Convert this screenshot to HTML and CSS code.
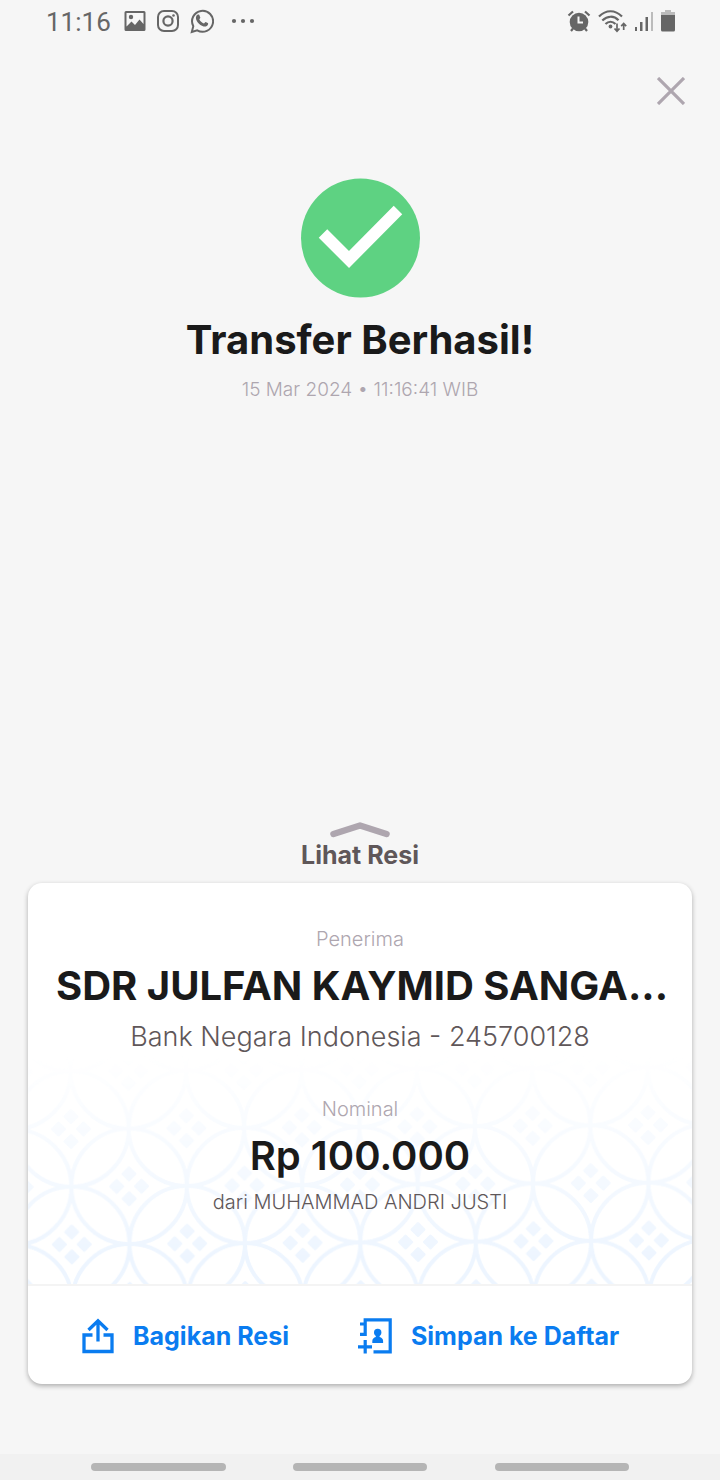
FILE: index.html
```
<!DOCTYPE html>
<html lang="id">
<head>
<meta charset="utf-8">
<meta name="viewport" content="width=device-width, initial-scale=1">
<title>Transfer Berhasil</title>
<link rel="stylesheet" href="styles.css">
</head>
<body>
<div class="screen">
  <div class="status">
    <div class="status-left">
      <span class="clock">11:16</span>
      <svg class="icon" width="22" height="24" viewBox="0 0 22 24" aria-hidden="true"><path fill-rule="evenodd" d="M2 2h18a1.500 1.500 0 0 1 1.500 1.500v17A1.500 1.500 0 0 1 20 22H2a1.500 1.500 0 0 1-1.500-1.500v-17A1.500 1.500 0 0 1 2 2zM2.500 4v13.500l5-5 3.500 3.500 4.500-5.500 4 4.500V4z"/><circle cx="7" cy="8" r="2.200"/></svg>
      <svg class="icon line" width="22" height="24" viewBox="0 0 22 24" aria-hidden="true"><rect x="1" y="2" width="20" height="20" rx="6" stroke-width="2"/><circle cx="11" cy="12" r="4.600" stroke-width="2.200"/><circle class="solid" cx="16.500" cy="6.500" r="1.300"/></svg>
      <svg class="icon" width="24" height="26" viewBox="0 0 24 26" aria-hidden="true"><path fill="none" stroke="currentColor" stroke-width="2" d="M1.800 24l1.500-5.800A10.500 10.500 0 1 1 7.200 22.300z"/><path d="M8.300 6.500c.6 0 .8.100 1 .6l1 2.300c.2.500-.9 1.500-1 1.900.9 2 2.500 3.400 4.600 4.200.5 0 1.200-1.500 1.600-1.500.3 0 2.400 1.100 2.600 1.300.3 1.400-.8 2.900-2.300 3.200-4.300.5-9.800-4.500-9.900-8.600 0-1.600 1-3.400 2.400-3.400z"/></svg>
      <svg class="icon dots" width="24" height="24" viewBox="0 0 24 24" aria-hidden="true"><circle cx="3" cy="12" r="2.100"/><circle cx="12" cy="12" r="2.100"/><circle cx="21" cy="12" r="2.100"/></svg>
    </div>
    <div class="status-right">
      <svg class="icon" width="24" height="24" viewBox="0 0 24 24" aria-hidden="true"><circle cx="12" cy="13" r="9.300"/><path fill="none" stroke="currentColor" stroke-width="2.200" d="M1.500 6.500l4.500-4M22.500 6.500l-4.500-4M6 19.500L4 22M18 19.500l2 2.500"/><path class="cut" d="M11.500 7.500v6H16"/></svg>
      <svg class="icon" width="29" height="24" viewBox="0 0 29 24" aria-hidden="true"><path fill="none" stroke="currentColor" stroke-width="2.200" d="M1 7.500C8 .5 17 .5 24 7.500M4.300 11.500C9.500 6.500 16 6.500 20.500 11.300M7.500 15c3-3 7-3 10 0"/><circle cx="12.500" cy="17.500" r="1.900"/><path fill="none" stroke="currentColor" stroke-width="1.700" d="M19 14.500V22M16.500 19.500L19 22.200l2.500-2.700M25.700 21v-6.500M23.200 17.200l2.500-2.700 2.500 2.700"/></svg>
      <svg class="icon" width="20" height="24" viewBox="0 0 20 24" aria-hidden="true"><path d="M1 18h2v4H1zM6 13h2.500v9H6zM11.500 8H14v14h-2.500z"/><path class="faint" d="M17 3h2v19h-2z"/></svg>
      <svg class="icon" width="14" height="24" viewBox="0 0 14 24" aria-hidden="true"><path class="faint" d="M4 1h6v2h4v4H0V3h4z"/><path d="M0 6h14V21a1.500 1.500 0 0 1-1.500 1.500h-11A1.500 1.500 0 0 1 0 21z"/></svg>
    </div>
  </div>

  <header class="topbar">
    <button class="close" type="button" aria-label="Tutup">
      <svg width="28" height="28" viewBox="0 0 28 28"><path d="M1 1l26 26M27 1L1 27" fill="none" stroke="currentColor" stroke-width="3.200"/></svg>
    </button>
  </header>

  <main class="main">
    <section class="result">
      <svg width="120" height="120" viewBox="0 0 120 120" aria-hidden="true"><circle cx="60.500" cy="60" r="59.500" fill="#5ed282"/><path d="M23 55.500L49 81.500l49-49.500" fill="none" stroke="#fff" stroke-width="12"/></svg>
      <h1 class="headline">Transfer Berhasil!</h1>
      <p class="date">15 Mar 2024 • 11:16:41 WIB</p>
    </section>

    <section class="receipt">
      <button class="expand" type="button">
        <svg width="60" height="18" viewBox="0 0 60 18" aria-hidden="true"><path d="M3.500 13L30 4.500 56.500 13" fill="none" stroke="#aea6af" stroke-width="6.500" stroke-linecap="round" stroke-linejoin="round"/></svg>
        <span>Lihat Resi</span>
      </button>
      <div class="card">
        <div class="recipient">
          <p class="label">Penerima</p>
          <h2 class="value">SDR JULFAN KAYMID SANGA...</h2>
          <p class="bank">Bank Negara Indonesia - 245700128</p>
        </div>
        <div class="amount">
          <svg class="batik" width="100%" height="100%" aria-hidden="true">
            <defs>
              <pattern id="kawung" width="116" height="116" patternUnits="userSpaceOnUse" patternTransform="translate(43 74) rotate(-0.400) scale(0.995)">
                <g fill="none" stroke="#edf5ff" stroke-width="4">
                  <circle cx="0" cy="0" r="58"/><circle cx="116" cy="0" r="58"/><circle cx="0" cy="116" r="58"/><circle cx="116" cy="116" r="58"/><circle cx="58" cy="58" r="58"/>
                </g>
                <g fill="#edf5ff" stroke="#edf5ff" stroke-width="3" stroke-linejoin="round">
                  <path id="gem" d="M0-18.500l6 6L0-6.500-6-12.500zM0 6.500l6 6L0 18.500-6 12.500zM-12.500-6L-6.500 0-12.500 6-18.500 0zM12.500-6L18.500 0 12.500 6 6.500 0z"/>
                  <use href="#gem" x="116"/><use href="#gem" y="116"/><use href="#gem" x="116" y="116"/><use href="#gem" x="58" y="58"/>
                </g>
              </pattern>
              <linearGradient id="fade" x1="0" y1="0" x2="0" y2="1"><stop offset="0" stop-color="#fff" stop-opacity="0"/><stop offset="0.900" stop-color="#fff"/></linearGradient>
              <mask id="rise"><rect width="100%" height="100%" fill="url(#fade)"/></mask>
            </defs>
            <rect width="100%" height="100%" fill="url(#kawung)" mask="url(#rise)"/>
          </svg>
          <p class="label">Nominal</p>
          <p class="value total">Rp 100.000</p>
          <p class="sender">dari MUHAMMAD ANDRI JUSTI</p>
        </div>
        <div class="actions">
          <button class="action" type="button">
            <svg width="32" height="36" viewBox="0 0 32 36" aria-hidden="true"><path d="M10.500 17H2v16.500h28V17h-8.500M16 3v20.500M6.500 12L16 2.700 25.500 12" fill="none" stroke="currentColor" stroke-width="3.300"/></svg>
            <span>Bagikan Resi</span>
          </button>
          <button class="action" type="button">
            <svg width="34" height="36" viewBox="0 0 34 36" aria-hidden="true"><path d="M7.200 18V1.800h25v32H15.500M2 6h6M2 16.300h6M7.200 22v13.500M0 28.800h14" fill="none" stroke="currentColor" stroke-width="3.200"/><circle cx="19.700" cy="14.500" r="3.700"/><path d="M14.300 25v-2c0-2 1.500-3.400 3.500-4v-2h3.800v2c2 .6 3.500 2 3.500 4v2z"/></svg>
            <span>Simpan ke Daftar</span>
          </button>
        </div>
      </div>
    </section>
  </main>

  <div class="navbar"><i class="pill"></i><i class="pill"></i><i class="pill"></i></div>
</div>
</body>
</html>
```

FILE: styles.css
```
* { box-sizing: border-box; }

body {
  margin: 0;
  background: #f6f6f6;
  color: #1a1a1a;
  font-family: Inter, "Liberation Sans", sans-serif;
}

h1, h2, p { margin: 0; }

button {
  padding: 0;
  border: 0;
  background: none;
  font: inherit;
  cursor: pointer;
}

svg { display: block; flex: none; }

.screen {
  display: flex;
  flex-direction: column;
  min-height: 100vh;
}

.status {
  display: flex;
  justify-content: space-between;
  height: 42px;
  padding: 0 45px 0 46px;
  color: #666;
}

.status-left,
.status-right {
  display: flex;
  align-items: center;
}

.status-left { gap: 11px; }
.status-right { gap: 7px; }

.clock {
  padding: 2px 2px 0 0;
  font-family: Roboto, sans-serif;
  font-size: 26px;
  line-height: 40px;
}

.icon { fill: currentColor; }
.line { fill: none; stroke: currentColor; }
.solid { fill: currentColor; stroke: none; }
.dots { margin-left: 6px; }
.faint { fill: #bcbcbc; }
.cut { fill: none; stroke: #f6f6f6; stroke-width: 2; }

.topbar {
  display: flex;
  justify-content: flex-end;
  padding: 35px 35px 0;
}

.close { color: #aea6af; }

.main {
  display: flex;
  flex: 1;
  flex-direction: column;
  justify-content: space-between;
  padding: 73px 28px 70px;
}

.result {
  display: flex;
  flex-direction: column;
  align-items: center;
}

.headline {
  margin-top: 18px;
  font-size: 40px;
  font-weight: 700;
  line-height: 48px;
}

.date,
.label {
  color: #aea6af;
  font-size: 20px;
  font-weight: 300;
  line-height: 28px;
}

.date {
  margin-top: 12px;
  font-size: 19px;
}

.expand {
  display: flex;
  flex-direction: column;
  align-items: center;
  margin: 0 auto 12px;
  color: #5f5759;
  font-size: 25px;
  font-weight: 700;
  line-height: 32px;
}

.card {
  overflow: hidden;
  border-radius: 14px;
  background: #fff;
  box-shadow: 0 2px 5px rgba(0, 0, 0, 0.3);
  text-align: center;
}

.recipient { padding: 42px 28px 0; }

.value {
  margin-top: 9px;
  font-size: 40px;
  font-weight: 700;
  line-height: 48px;
  white-space: nowrap;
}

.total { font-weight: 600; }

.bank {
  margin-top: 9px;
  color: #5f5759;
  font-size: 27px;
  font-weight: 300;
  line-height: 36px;
}

.amount {
  position: relative;
  padding: 40px 28px 68px;
}

.amount p { position: relative; }

.batik {
  position: absolute;
  inset: 0;
}

.sender {
  margin-top: 8px;
  color: #5f5759;
  font-size: 20px;
  font-weight: 300;
  line-height: 28px;
}

.actions {
  display: flex;
  gap: 69px;
  padding: 32px 54px 30px;
  border-top: 2px solid #f4f4f4;
}

.action {
  display: flex;
  gap: 19px;
  align-items: center;
  color: #0a7cf0;
  font-size: 25px;
  font-weight: 700;
  line-height: 36px;
  white-space: nowrap;
}

.action svg { fill: currentColor; }

.navbar {
  display: flex;
  justify-content: space-between;
  height: 26px;
  padding: 9px 91px 0;
  background: #f1f1f1;
}

.pill {
  width: 25%;
  height: 8px;
  border-radius: 4px;
  background: #b5b5b5;
}
```
